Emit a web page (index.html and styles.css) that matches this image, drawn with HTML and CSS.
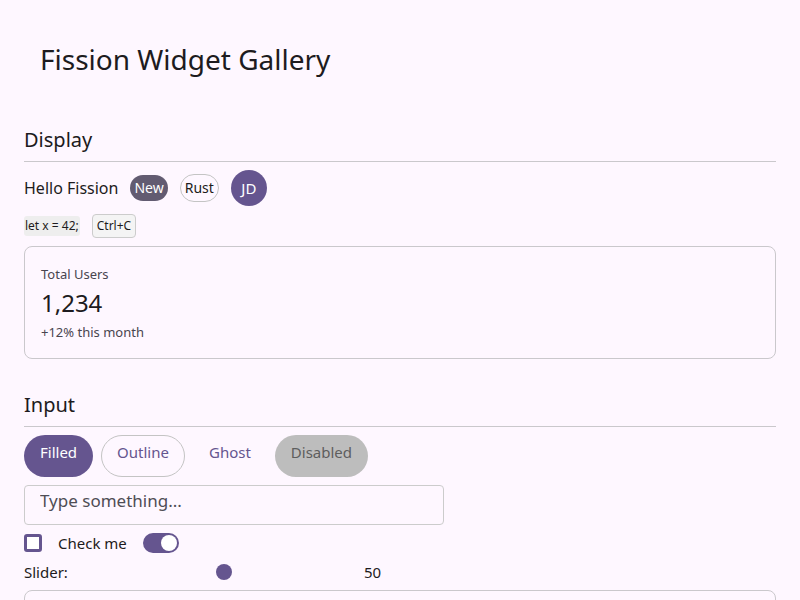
FILE: index.html
```html
<!DOCTYPE html>
<html lang="en">
<head>
<meta charset="utf-8">
<title>Fission Widget Gallery</title>
<link rel="stylesheet" href="styles.css">
</head>
<body>
<main class="page">
  <h1 class="title">Fission Widget Gallery</h1>

  <section class="section">
    <h2 class="section-title">Display</h2>
    <div class="row row-gap-12">
      <span class="text">Hello Fission</span>
      <span class="badge badge-filled">New</span>
      <span class="badge badge-outline">Rust</span>
      <span class="avatar">JD</span>
    </div>
    <div class="row row-gap-12">
      <code class="code">let x = 42;</code>
      <kbd class="kbd">Ctrl+C</kbd>
    </div>
    <div class="card">
      <div class="stat-label">Total Users</div>
      <div class="stat-value">1,234</div>
      <div class="stat-sub">+12% this month</div>
    </div>
  </section>

  <section class="section">
    <h2 class="section-title">Input</h2>
    <div class="row row-gap-8">
      <button class="btn btn-filled">Filled</button>
      <button class="btn btn-outline">Outline</button>
      <button class="btn btn-ghost">Ghost</button>
      <button class="btn btn-disabled" disabled>Disabled</button>
    </div>
    <input class="text-input" type="text" placeholder="Type something...">
    <div class="row row-gap-16 check-row">
      <span class="checkbox"></span>
      <span class="text-15">Check me</span>
      <span class="toggle"><span class="toggle-thumb"></span></span>
    </div>
    <div class="row slider-row">
      <span class="text-15">Slider:</span>
      <span class="slider"><span class="slider-thumb"></span></span>
      <span class="text-15">50</span>
    </div>
    <div class="card card-next"></div>
  </section>
</main>
</body>
</html>
```
FILE: styles.css
```css
* { box-sizing: border-box; }

html, body {
  margin: 0;
  background: #fef7ff;
  color: #1d1b20;
  font-family: "Noto Sans", "Open Sans", sans-serif;
}

.page {
  padding: 24px;
  display: flex;
  flex-direction: column;
  gap: 32px;
}

.title {
  margin: 0;
  padding: 16px;
  font-size: 28px;
  line-height: 38px;
  font-weight: 400;
}

.section {
  display: flex;
  flex-direction: column;
  gap: 8px;
}

.section-title {
  margin: 0;
  font-size: 20px;
  line-height: 28px;
  font-weight: 400;
  padding-bottom: 7px;
  border-bottom: 1px solid #cac8cc;
}

.row {
  display: flex;
  align-items: center;
}
.row-gap-12 { gap: 12px; }
.row-gap-8 { gap: 8px; }
.row-gap-16 { gap: 16px; }

.text {
  font-size: 16px;
  line-height: 22px;
}
.text-15 {
  font-size: 15px;
  line-height: 20px;
}

.badge {
  display: inline-block;
  font-size: 14px;
  line-height: 20px;
  padding: 3px 4px;
  border-radius: 999px;
}
.badge-filled {
  background: #625b71;
  color: #ffffff;
}
.badge-outline {
  border: 1px solid #c4c4c4;
  color: #1d1b20;
}

.avatar {
  width: 36px;
  height: 36px;
  border-radius: 50%;
  background: #65558f;
  color: #ffffff;
  font-size: 15px;
  display: flex;
  align-items: center;
  justify-content: center;
}

.code {
  font-family: "Noto Sans", sans-serif;
  font-size: 12px;
  line-height: 16px;
  padding: 2px 1px;
  background: #eeeeee;
  border-radius: 3px;
}
.kbd {
  font-family: "Noto Sans", sans-serif;
  font-size: 12px;
  line-height: 16px;
  padding: 3px 4px;
  background: #f4f4f4;
  border: 1px solid #cccccc;
  border-radius: 4px;
}

.card {
  border: 1px solid #cac8cc;
  border-radius: 8px;
  padding: 17px 16px 15px;
  display: flex;
  flex-direction: column;
  gap: 3px;
  height: 113px;
}
.stat-label {
  font-size: 13px;
  line-height: 20px;
  color: #49454f;
}
.stat-value {
  font-size: 24px;
  line-height: 32px;
}
.stat-sub {
  font-size: 13px;
  line-height: 20px;
  color: #49454f;
}

.btn {
  font-family: inherit;
  font-size: 15px;
  height: 42px;
  padding: 0 15px 8px;
  border: 1px solid transparent;
  border-radius: 21px;
  background: transparent;
  color: #65558f;
}
.btn-filled {
  background: #65558f;
  color: #ffffff;
}
.btn-outline {
  border-color: #c4c4c4;
}
.btn-disabled {
  background: #bdbdbd;
  color: #5e5e5e;
}

.text-input {
  width: 420px;
  height: 40px;
  border: 1px solid #cccccc;
  border-radius: 4px;
  background: transparent;
  padding: 0 15px 10px;
  font-family: inherit;
  font-size: 17px;
}
.text-input::placeholder {
  color: #4f4d55;
}

.check-row { height: 20px; }

.checkbox {
  width: 18px;
  height: 18px;
  border: 3px solid #65558f;
  border-radius: 3px;
  background: #ffffff;
}

.toggle {
  width: 36px;
  height: 20px;
  border-radius: 10px;
  background: #65558f;
  display: flex;
  align-items: center;
  justify-content: flex-end;
  padding: 2px;
}
.toggle-thumb {
  width: 16px;
  height: 16px;
  border-radius: 50%;
  background: #ffffff;
}

.slider-row { height: 21px; }
.slider {
  width: 280px;
  margin-left: 16px;
  display: flex;
  justify-content: center;
  align-items: center;
}
.slider-thumb {
  width: 16px;
  height: 16px;
  border-radius: 50%;
  background: #65558f;
}

.card-next { height: 80px; }
```
